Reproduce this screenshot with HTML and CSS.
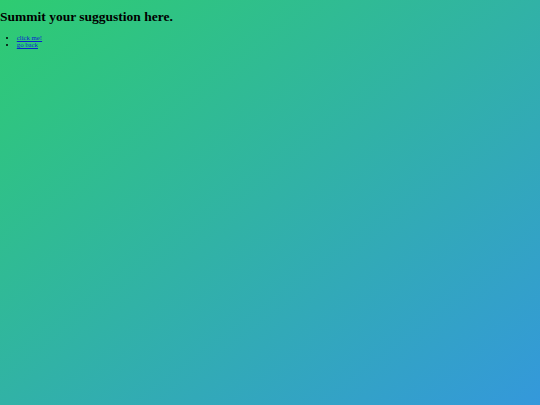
FILE: index.html
```html
<!DOCTYPE html>
<html lang="en">
<head>
<meta charset="utf-8">
<title>Suggestion</title>
<link rel="stylesheet" href="styles.css">
</head>
<body class="page">
<h1 class="title">Summit your suggustion here.</h1>
<ul class="links">
<li><a class="link" href="#">click me!</a></li>
<li><a class="link" href="#">go back</a></li>
</ul>
</body>
</html>
```
FILE: styles.css
```css
html {
  min-height: 100%;
  background: linear-gradient(to bottom right, #2ecc71, #3498db);
}
.page {
  margin: 0;
  font-family: "Liberation Serif", "Times New Roman", serif;
  font-size: 6.75px;
  color: #000;
}
.title {
  font-size: 2em;
  font-weight: bold;
  margin: 0.67em 0;
}
.links {
  margin: 1em 0;
  padding-left: 16.8px;
}
.link {
  color: #0b1fd0;
}
```
